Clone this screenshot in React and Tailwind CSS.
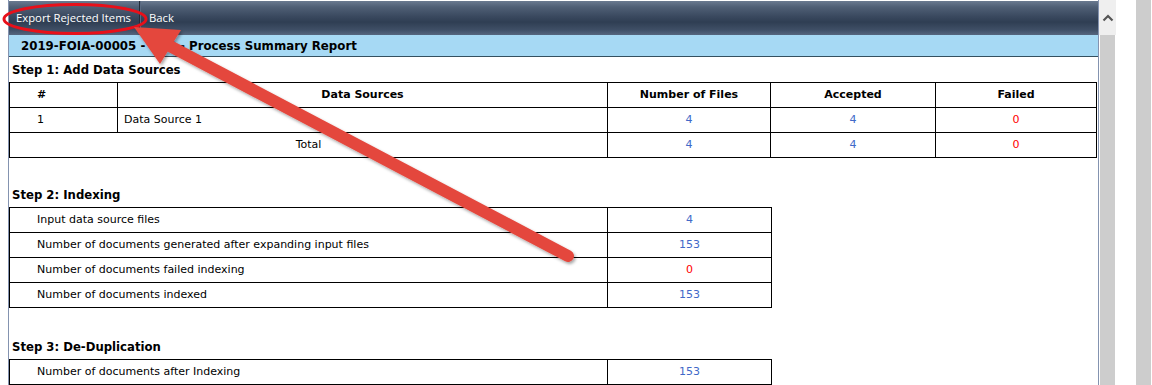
import React from "react";

const F = { fontFamily: '"DejaVu Sans", Verdana, sans-serif' };
const M = { fontFamily: '"Open Sans", "Noto Sans", sans-serif' };

function Num({ v, red }) {
  return <span className={red ? "text-[#ff0000]" : "text-[#4169c8]"}>{v}</span>;
}

export default function App() {
  const cell = "border border-black h-[25px] p-0 align-middle";
  const head = "h-[25px] flex items-center pl-[3px] pt-[3px] font-bold text-[11.7px] text-black";
  return (
    <div className="relative w-[1152px] h-[385px] overflow-hidden bg-white flex" style={F}>
      <div className="w-[8px] shrink-0" />
      <div className="w-[1091px] shrink-0 flex flex-col border-l border-r border-[#8493b0]">
        <div className="h-[34px] mt-[1px] flex items-stretch bg-[linear-gradient(to_bottom,#6a7a90_0%,#4f5f75_18%,#3a495f_45%,#2f3e53_62%,#3f4f66_85%,#56667e_100%)]">
          <div className="flex items-center pl-[7px] pr-[8px] border-r border-[#222c3a] text-white text-[11.3px]" style={M}>
            Export Rejected Items
          </div>
          <div className="flex items-center pl-[8px] text-white text-[11.3px] border-l border-[#5a6a82]" style={M}>
            Back
          </div>
        </div>
        <div className="h-[22px] bg-[#a6d9f4] border-b border-[#34505f] flex items-center pl-[12px] pt-[2px] font-bold text-[11.8px] text-black">
          2019-FOIA-00005 - EDP - Process Summary Report
        </div>
        <div className={head}>Step 1: Add Data Sources</div>
        <table className="border-collapse w-[1088px] text-[11px] text-black">
          <tbody>
            <tr className="font-bold">
              <td className={cell + " w-[108px] pl-[27px]"}>#</td>
              <td className={cell + " w-[490px] text-center"}>Data Sources</td>
              <td className={cell + " w-[163px] text-center"}>Number of Files</td>
              <td className={cell + " w-[165px] text-center"}>Accepted</td>
              <td className={cell + " text-center"}>Failed</td>
            </tr>
            <tr>
              <td className={cell + " pl-[27px]"}>1</td>
              <td className={cell + " pl-[6px]"}>Data Source 1</td>
              <td className={cell + " text-center"}><Num v="4" /></td>
              <td className={cell + " text-center"}><Num v="4" /></td>
              <td className={cell + " text-center"}><Num v="0" red /></td>
            </tr>
            <tr>
              <td className={cell + " text-center"} colSpan={2}>Total</td>
              <td className={cell + " text-center"}><Num v="4" /></td>
              <td className={cell + " text-center"}><Num v="4" /></td>
              <td className={cell + " text-center"}><Num v="0" red /></td>
            </tr>
          </tbody>
        </table>
        <div className={head + " mt-[24px]"}>Step 2: Indexing</div>
        <table className="border-collapse w-[763px] text-[11px] text-black">
          <tbody>
            {[
              ["Input data source files", "4", false],
              ["Number of documents generated after expanding input files", "153", false],
              ["Number of documents failed indexing", "0", true],
              ["Number of documents indexed", "153", false],
            ].map(([l, v, r]) => (
              <tr key={l}>
                <td className={cell + " w-[598px] pl-[27px]"}>{l}</td>
                <td className={cell + " text-center"}><Num v={v} red={r} /></td>
              </tr>
            ))}
          </tbody>
        </table>
        <div className={head + " mt-[26px]"}>Step 3: De-Duplication</div>
        <table className="border-collapse w-[763px] text-[11px] text-black">
          <tbody>
            <tr>
              <td className={cell + " w-[598px] pl-[27px]"}>Number of documents after Indexing</td>
              <td className={cell + " text-center"}><Num v="153" /></td>
            </tr>
          </tbody>
        </table>
      </div>
      <div className="w-[17px] shrink-0 flex flex-col">
        <div className="h-[35px] bg-[#efefef] flex items-center justify-center">
          <svg width="12" height="8" viewBox="0 0 12 8">
            <path d="M1.5 6.5 L6 2 L10.5 6.5" fill="none" stroke="#555" strokeWidth="2.2" />
          </svg>
        </div>
        <div className="flex-1 bg-[#cdcdcd] mx-[1px]" />
      </div>
      <div className="w-[20px] shrink-0" />
      <div className="w-[15px] shrink-0 bg-[#cdcdcd]" />
      <svg className="absolute left-0 top-0 pointer-events-none" width="1152" height="385">
        <defs>
          <filter id="sh" x="-20%" y="-20%" width="140%" height="140%">
            <feDropShadow dx="1.5" dy="2" stdDeviation="1.5" floodColor="#000" floodOpacity="0.35" />
          </filter>
        </defs>
        <ellipse cx="75" cy="19" rx="71" ry="14.5" fill="none" stroke="#e8101a" strokeWidth="3" />
        <g filter="url(#sh)">
          <line x1="568" y1="256" x2="166" y2="44" stroke="#e4473d" strokeWidth="12" strokeLinecap="round" />
          <polygon points="134,27 181,30 160,64" fill="#e4473d" />
        </g>
      </svg>
    </div>
  );
}
